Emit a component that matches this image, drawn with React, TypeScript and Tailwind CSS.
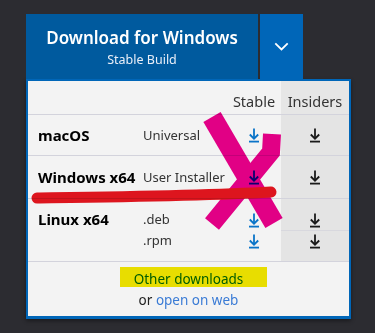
import React from 'react';

function DownloadIcon({ color }: { color: string }) {
    return (
        <svg width="12" height="16" viewBox="0 0 12 16" fill="none" stroke={color} strokeWidth="1.8">
            <path d="M6 1.5 V11.5" />
            <path d="M1.8 7.5 L6 11.7 L10.2 7.5" />
            <path d="M1 14.6 H11" />
        </svg>
    );
}

function Row({ os, types }: { os: string; types: string[] }) {
    const multi = types.length > 1;
    return (
        <div className="grid grid-cols-[115px_82px_56px_68px] border-t border-[#d3d3dc]">
            <div className={`pl-[10px] font-bold text-[15px] text-black whitespace-nowrap ${multi ? 'pt-[10px] leading-[21px]' : 'flex items-center'}`}>
                {os}
            </div>
            <div className={`text-[13px] text-[#333] whitespace-nowrap ${multi ? 'pt-[10px] pb-[10px]' : 'flex flex-col justify-center'}`}>
                {types.map((t) => (
                    <div key={t} className="h-[21px] leading-[21px]">{t}</div>
                ))}
            </div>
            <div className={`${multi ? 'pt-[10px] pb-[10px]' : 'flex flex-col justify-center'}`}>
                {types.map((t) => (
                    <div key={t} className="h-[21px] flex items-center justify-center pl-[2px]">
                        <DownloadIcon color="#0a74c8" />
                    </div>
                ))}
            </div>
            <div className={`bg-[#e4e4e4] ${multi ? 'pt-[10px] pb-[10px]' : 'flex flex-col justify-center'}`}>
                {types.map((t, i) => (
                    <div key={t} className={`h-[21px] flex items-center justify-center ${i > 0 ? 'border-t border-[#d8d8de]' : ''}`}>
                        <DownloadIcon color="#1a1a1a" />
                    </div>
                ))}
            </div>
        </div>
    );
}

export default function App() {
    return (
        <div
            className="relative w-[375px] h-[333px] bg-[#2c2c31] pt-[14px] pl-[26px] overflow-hidden"
            style={{ fontFamily: '"Noto Sans", "Open Sans", sans-serif' }}
        >
            {/* Button bar */}
            <div className="flex h-[65px]">
                <div className="w-[232px] bg-[#005a9e] flex flex-col items-center justify-center text-white">
                    <div className="text-[17px] font-semibold leading-[22px] mt-[2px]">Download for Windows</div>
                    <div className="text-[12.5px] leading-[18px] mt-[2px] text-[#e8eef8]">Stable Build</div>
                </div>
                <div className="w-[2px]" />
                <div className="w-[43px] bg-[#0066b8] flex items-center justify-center">
                    <svg width="15" height="9" viewBox="0 0 15 9" fill="none" stroke="white" strokeWidth="1.8">
                        <path d="M1.3 1.3 L7.5 7.5 L13.7 1.3" />
                    </svg>
                </div>
            </div>

            {/* Dropdown panel */}
            <div className="w-[325px] h-[240px] border-2 border-b-[3px] border-[#0066b8] bg-[#f3f3f3] shadow-[0_2px_4px_rgba(0,0,0,0.4)]">
                <div className="grid grid-cols-[115px_82px_56px_68px] h-[33px]">
                    <div />
                    <div />
                    <div className="text-[14.5px] text-[#333] flex items-start justify-center pt-[10px] pl-[2px]">Stable</div>
                    <div className="bg-[#e6e6e6] text-[14.5px] text-[#333] flex items-start justify-center pt-[10px]">Insiders</div>
                </div>
                <div className="[&>div:nth-child(1)]:h-[41px] [&>div:nth-child(2)]:h-[43px]">
                    <Row os="macOS" types={['Universal']} />
                    <Row os="Windows x64" types={['User Installer']} />
                    <Row os="Linux x64" types={['.deb', '.rpm']} />
                </div>
                <div className="border-t border-[#d3d3dc] flex flex-col items-center pt-[7px] text-[13.5px] leading-[21px]">
                    <div className="text-[#0066b8]">Other downloads</div>
                    <div className="text-[#222]">
                        or <span className="text-[#3a7bd5]">open on web</span>
                    </div>
                </div>
            </div>

            {/* Hand-drawn annotations */}
            <svg className="absolute inset-0 pointer-events-none mix-blend-multiply" width="375" height="333" viewBox="0 0 375 333" fill="none">
                <rect x="120" y="267" width="147" height="20" fill="#f4e800" />
                <path d="M212 117 L274 223" stroke="#ec008c" strokeWidth="20" />
                <path d="M272 134 L271 152 L212 224" stroke="#ec008c" strokeWidth="18" />
                <path d="M37 198 C110 197 200 196 271 192" stroke="#e8161f" strokeWidth="11" strokeLinecap="round" />
            </svg>
        </div>
    );
}
